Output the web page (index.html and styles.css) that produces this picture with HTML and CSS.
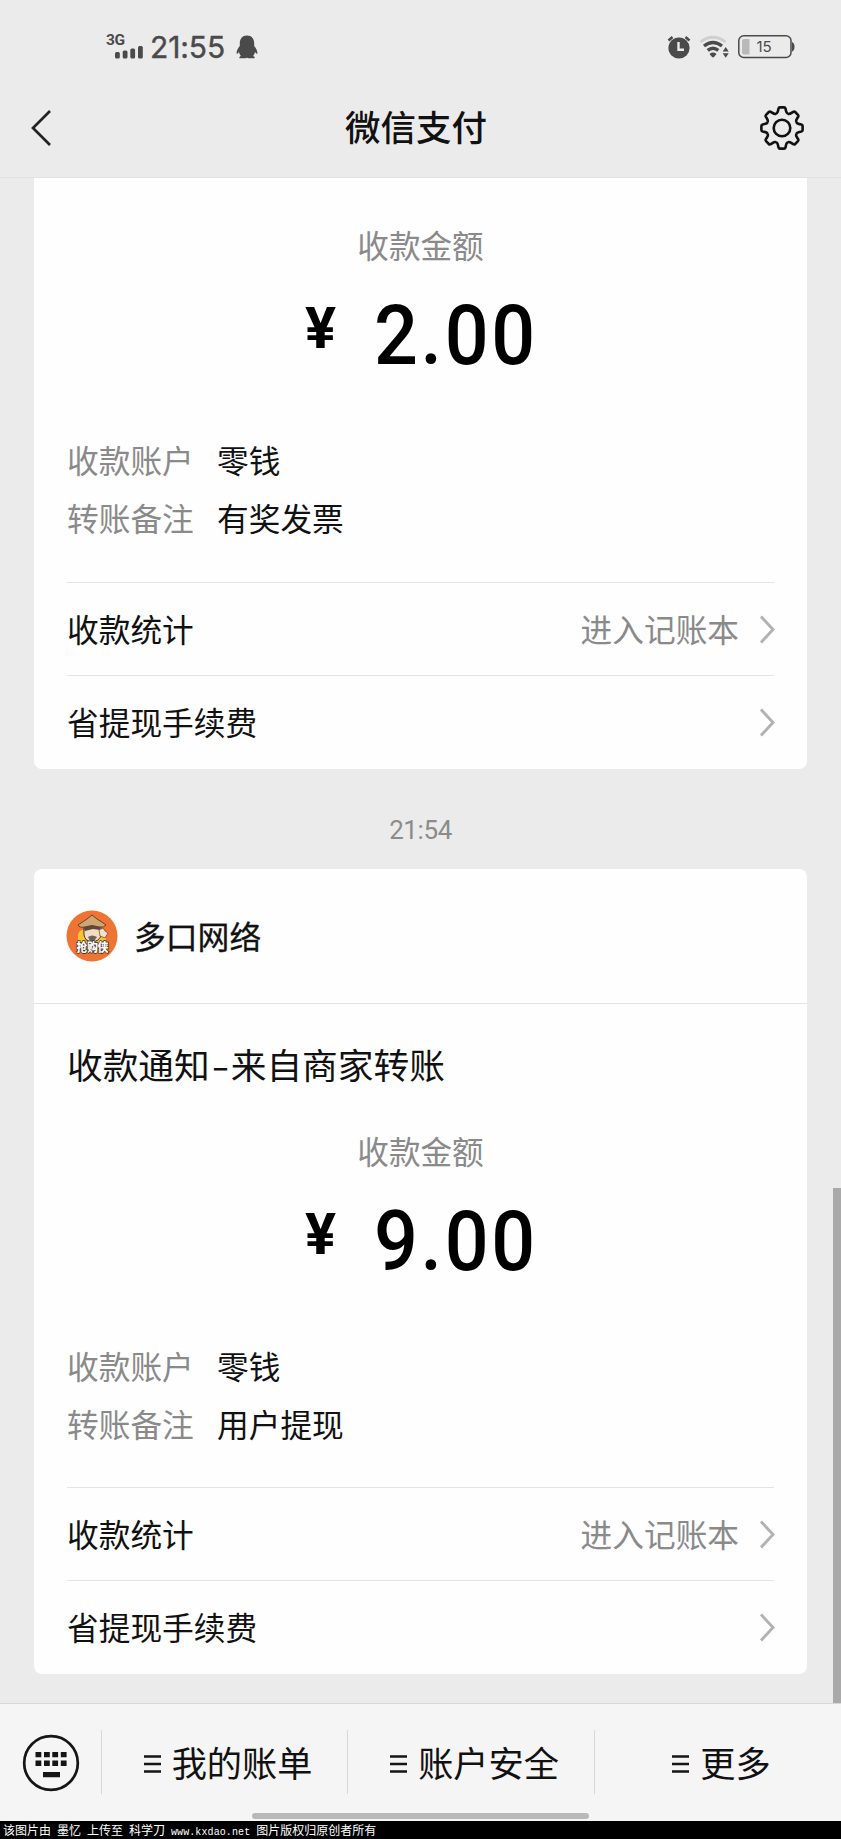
FILE: index.html
```html
<!DOCTYPE html>
<html lang="zh-CN">
<head>
<meta charset="utf-8">
<title>微信支付</title>
<link rel="stylesheet" href="styles.css">
</head>
<body>
<svg class="defs" width="0" height="0">
  <defs>
    <path id="tooth" d="M-5.9-14.2C-4.7-14.8-4.2-15.8-3.9-17.4L-3.5-19.4Q-3.2-20.6-2-20.6L2-20.6Q3.2-20.6 3.5-19.4L3.9-17.4C4.2-15.8 4.7-14.8 5.9-14.2"/>
    <path id="chevron" d="M2 1.5L14 14.5L2 27.5"/>
    <path id="lines" d="M0 1.5H17M0 9H17M0 16.5H17"/>
  </defs>
</svg>
<header class="header">
  <div class="status">
    <div class="status-left">
      <svg class="signal" width="40" height="30" viewBox="0 0 40 30">
        <text class="net" x="0" y="16.3" textLength="19">3G</text>
        <rect x="9" y="23" width="4.8" height="6.5" rx="1.5"/>
        <rect x="16.7" y="21.5" width="4.8" height="8" rx="1.5"/>
        <rect x="24.3" y="19.5" width="4.8" height="10" rx="1.5"/>
        <rect x="32" y="17" width="4.8" height="12.5" rx="1.5"/>
      </svg>
      <span class="clock">21:55</span>
      <svg class="penguin" width="22" height="24" viewBox="0 0 22 24">
        <path d="M11 .5C6.300 .5 3.800 4 3.800 8.500V11C2.500 12.500 .5 15.500 .6 18.200C.7 19.300 1.500 19 3 17C3.400 18.800 4 20 5 21C3.500 21.500 3.200 22.200 3.400 23.300H9.500L11 22.700L12.500 23.300H18.600C18.800 22.200 18.500 21.500 17 21C18 20 18.600 18.800 19 17C20.500 19 21.300 19.300 21.400 18.200C21.500 15.500 19.500 12.500 18.200 11V8.500C18.200 4 15.700 .5 11 .5Z"/>
      </svg>
    </div>
    <div class="status-right">
      <svg width="24" height="24" viewBox="0 0 24 24">
        <circle cx="12" cy="13" r="10.600"/>
        <path class="alarm-ear" d="M1.500 5.500L5.500 2M22.500 5.500L18.500 2"/>
        <path class="alarm-hand" d="M11.500 7V14.700H17"/>
      </svg>
      <svg class="wifi" width="30" height="24" viewBox="0 0 30 24">
        <path class="arc faint" d="M1.500 7Q14 -2.500 26.500 7"/>
        <path class="arc" d="M5 11Q14 4 23 11"/>
        <path class="arc" d="M8.700 15.400Q14 11 19.300 15.400"/>
        <path d="M10.500 19Q14 16.200 17.500 19L15 22Q14 22.800 13 22Z"/>
        <path d="M26.700 12L29.700 16.500H23.700ZM26.700 22.800L29.700 18.300H23.700Z"/>
      </svg>
      <svg class="battery" width="58" height="24" viewBox="0 0 58 24">
        <rect class="shell" x=".8" y=".8" width="52.200" height="21.700" rx="5"/>
        <path class="level" d="M6 4H11.500V19.500H6Q4 19.500 4 17.500V6Q4 4 6 4Z"/>
        <path d="M54 7Q56.500 8 56.500 11.700Q56.500 15.500 54 16.500Z"/>
        <text class="percent" x="18.500" y="17">15</text>
      </svg>
    </div>
  </div>
  <div class="navbar">
    <svg width="24" height="40" viewBox="0 0 24 40"><path class="back" d="M20 3L3 20L20 37"/></svg>
    <h1 class="title">微信支付</h1>
    <svg width="46" height="46" viewBox="-23 -23 46 46">
      <g class="gear">
        <use href="#tooth"/><use href="#tooth" transform="rotate(45)"/><use href="#tooth" transform="rotate(90)"/><use href="#tooth" transform="rotate(135)"/><use href="#tooth" transform="rotate(180)"/><use href="#tooth" transform="rotate(225)"/><use href="#tooth" transform="rotate(270)"/><use href="#tooth" transform="rotate(315)"/>
        <circle r="8.300"/>
      </g>
    </svg>
  </div>
</header>

<main class="chat">
  <section class="card card-first">
    <div class="summary">
      <div class="amount-label">收款金额</div>
      <div class="amount"><span class="yen">¥</span><span class="value">2.00</span></div>
      <dl class="details">
        <dt>收款账户</dt><dd>零钱</dd>
        <dt>转账备注</dt><dd>有奖发票</dd>
      </dl>
    </div>
    <div class="links">
      <div class="link"><span>收款统计</span><span class="hint">进入记账本</span><svg class="chev" width="16" height="29" viewBox="0 0 16 29"><use href="#chevron"/></svg></div>
      <div class="link"><span>省提现手续费</span><svg class="chev" width="16" height="29" viewBox="0 0 16 29"><use href="#chevron"/></svg></div>
    </div>
  </section>

  <time class="stamp">21:54</time>

  <section class="card">
    <div class="merchant">
      <svg class="avatar" width="52" height="52" viewBox="0 0 52 52">
        <circle cx="26" cy="26" r="25.500" fill="#ee7433"/>
        <path d="M12 33V25Q13 20 17 20L20 32ZM35 22Q41 25 40 33H31Z" fill="#f5c531"/>
        <path d="M18 16H35V26Q33 31 26 32Q19 31 18 25Z" fill="#f2dcc3" stroke="#4c382b" stroke-width="1"/>
        <path d="M17 17Q26 14 35 17L34 20L27 19L19 21Z" fill="#5a4a40"/>
        <path d="M22 27Q26 24 31 27L28 31H24Z" fill="#6c6059"/>
        <path d="M12 15Q18 11 21 9L26 5L31 9Q36 12 40 15Q38 18 33 17Q26 14 19 17Q13 18 12 15Z" fill="#cfa574" stroke="#6b4028" stroke-width="1"/>
        <path d="M33 20L37 18L39 21L42 23L39 28L34 26Z" fill="#f6dfc7" stroke="#6b4028" stroke-width=".7"/>
        <path d="M16 30Q26 34 36 30V36H16Z" fill="#e9c24a"/>
        <text class="avatar-name" x="10.500" y="41.500" textLength="32" lengthAdjust="spacingAndGlyphs">抢购侠</text>
      </svg>
      <span class="merchant-name">多口网络</span>
    </div>
    <div class="summary">
      <h2 class="notice">收款通知<span class="dash">-</span>来自商家转账</h2>
      <div class="amount-label">收款金额</div>
      <div class="amount"><span class="yen">¥</span><span class="value">9.00</span></div>
      <dl class="details">
        <dt>收款账户</dt><dd>零钱</dd>
        <dt>转账备注</dt><dd>用户提现</dd>
      </dl>
    </div>
    <div class="links">
      <div class="link"><span>收款统计</span><span class="hint">进入记账本</span><svg class="chev" width="16" height="29" viewBox="0 0 16 29"><use href="#chevron"/></svg></div>
      <div class="link"><span>省提现手续费</span><svg class="chev" width="16" height="29" viewBox="0 0 16 29"><use href="#chevron"/></svg></div>
    </div>
  </section>
  <div class="scrollbar"></div>
</main>

<footer class="footer">
  <nav class="menu">
    <div class="keyboard">
      <svg width="58" height="58" viewBox="0 0 58 58">
        <circle class="ring" cx="29" cy="29" r="26.800"/>
        <path d="M13.500 18h5.800v5.200h-5.800zM22 18h5.800v5.200h-5.800zM30.300 18h5.800v5.200h-5.800zM38.800 18h5.800v5.200h-5.800zM13.500 26.500h5.800v5.400h-5.800zM22 26.500h5.800v5.400h-5.800zM30.300 26.500h5.800v5.400h-5.800zM38.800 26.500h5.800v5.400h-5.800zM21 38h17v5.300h-17z"/>
      </svg>
    </div>
    <div class="item"><svg class="bars" width="17" height="18"><use href="#lines"/></svg><span>我的账单</span></div>
    <div class="item"><svg class="bars" width="17" height="18"><use href="#lines"/></svg><span>账户安全</span></div>
    <div class="item"><svg class="bars" width="17" height="18"><use href="#lines"/></svg><span>更多</span></div>
  </nav>
  <div class="home"></div>
</footer>
<div class="credit">该图片由 墨忆 上传至 科学刀 <span class="latin">www.kxdao.net</span> 图片版权归原创者所有</div>
</body>
</html>
```
FILE: styles.css
```css
* { box-sizing: border-box; }
body {
  margin: 0;
  width: 841px;
  height: 1839px;
  overflow: hidden;
  display: flex;
  flex-direction: column;
  background: #ebebeb;
  color: #111;
  font-family: "Noto Sans CJK SC", sans-serif;
}
svg { display: block; flex: none; overflow: visible; }
.defs { position: absolute; }
h1, h2, dl, dd { margin: 0; font-weight: 400; }

.header { height: 178px; flex: none; border-bottom: 1px solid #e2e2e2; }
.status {
  height: 80px;
  padding: 14px 46px 0 106px;
  display: flex;
  justify-content: space-between;
  align-items: center;
  fill: #4a4a4a;
}
.status-left, .status-right { display: flex; align-items: center; }
.net { font: 700 15.5px Roboto, sans-serif; }
.signal { margin-bottom: 6px; }
.clock {
  margin-left: 4px;
  width: 77px;
  font: 400 30px/30px Inter, sans-serif;
  letter-spacing: -0.1px;
  color: #4a4a4a;
  -webkit-text-stroke: .4px #4a4a4a;
  white-space: nowrap;
}
.penguin { margin-left: 9px; margin-top: -1px; }
.alarm-ear { stroke: #4a4a4a; stroke-width: 2.5; }
.alarm-hand { fill: none; stroke: #ebebeb; stroke-width: 2.4; }
.status-right { margin-top: -1px; }
.wifi { margin-left: 8px; }
.battery { margin-left: 9px; margin-right: -1px; }
.arc { fill: none; stroke: #4a4a4a; stroke-width: 3.4; }
.faint { stroke: #cfcfcf; stroke-width: 2.8; }
.shell { fill: none; stroke: #4a4a4a; stroke-width: 1.5; }
.level { fill: #b9b9b9; }
.percent { font: 400 15px Inter, sans-serif; }

.navbar {
  height: 96px;
  padding: 0 36px 0 30px;
  display: flex;
  align-items: center;
  justify-content: space-between;
}
.back { fill: none; stroke: #222; stroke-width: 2.7; }
.title { font-size: 35.5px; line-height: 50px; font-weight: 500; margin: -4px 0 0 19px; }
.gear { fill: none; stroke: #111; stroke-width: 2.6; stroke-linejoin: round; }

.chat { position: relative; height: 1525px; flex: none; padding: 0 34px; }
.card { background: #fefefe; border-radius: 8px; overflow: hidden; }
.card-first { border-radius: 0 0 8px 8px; }
.card-first .summary { height: 404px; padding-top: 43px; }
.summary { height: 483px; padding: 34px 33px 0; }
.amount-label { text-align: center; font-size: 31.6px; line-height: 46px; color: #8a8a8a; }
.amount {
  display: flex;
  justify-content: center;
  height: 96px;
  padding-left: 9px;
  color: #000;
  font-family: Roboto, sans-serif;
}
.yen { font-size: 58px; font-weight: 700; line-height: 70px; padding-top: 26px; margin-right: 31px; transform: scaleX(1); }
.value { font-size: 84px; font-weight: 500; line-height: 96px; padding-top: 21px; letter-spacing: 2.8px; transform: scaleX(.92); }
.details {
  margin-top: 67px;
  display: grid;
  grid-template-columns: 150px 1fr;
  grid-auto-rows: 58px;
  font-size: 31.7px;
  line-height: 58px;
}
.details dt { color: #8a8a8a; }
.links { padding: 0 33px; }
.link {
  height: 93px;
  border-top: 1px solid #e3e3e3;
  display: flex;
  align-items: center;
  font-size: 31.7px;
  line-height: 46px;
}
.link span { margin-bottom: 3px; }
.link:last-child { height: 94px; }
.hint { margin-left: auto; color: #8a8a8a; }
.chev { margin-left: 20px; margin-right: -1px; fill: none; stroke: #b2b2b2; stroke-width: 2.9; }
.link span:first-child + .chev { margin-left: auto; }
.stamp {
  display: block;
  height: 100px;
  padding-top: 11px;
  text-align: center;
  color: #8b8b8b;
  font: 400 26px/100px Roboto, sans-serif;
  letter-spacing: -.4px;
}
.merchant {
  height: 135px;
  padding-left: 32px;
  display: flex;
  align-items: center;
  border-bottom: 1px solid #e3e3e3;
}
.avatar-name { font: 900 12px "Noto Sans CJK SC", sans-serif; fill: #fff; stroke: #3e2b20; stroke-width: 1.5px; paint-order: stroke; }
.merchant-name { margin: -3px 0 0 16px; font-size: 31.8px; line-height: 46px; -webkit-text-stroke: .3px #111; }
.notice { font-size: 35.7px; line-height: 52px; margin-bottom: 37px; }
.dash { display: inline-block; width: 21px; text-align: center; transform: scaleX(1.45); }
.scrollbar { position: absolute; right: 0; top: 1010px; width: 8px; height: 515px; background: #a9a9a9; }

.footer { height: 118px; flex: none; background: #f5f5f5; border-top: 1px solid #d8d8d8; }
.menu { display: grid; grid-template-columns: 101px 246px 247px 247px; height: 109px; padding: 26px 0 19px; }
.keyboard { display: flex; align-items: center; padding: 1px 0 0 22px; fill: #151515; }
.ring { fill: none; stroke: #151515; stroke-width: 2.7; }
.item {
  display: flex;
  align-items: center;
  justify-content: center;
  gap: 11px;
  padding-left: 7px;
  border-left: 1px solid #d8d8d8;
  font-size: 35.2px;
  line-height: 50px;
}
.bars { stroke: #151515; stroke-width: 2.6; margin-top: 3px; }
.home { width: 337px; height: 6px; margin: 0 auto; border-radius: 3px; background: #b9b9b9; }
.credit {
  height: 18px;
  flex: none;
  padding-left: 3px;
  background: #000;
  color: #fff;
  white-space: pre;
  font: 12px/17px "Noto Sans CJK SC", sans-serif;
  word-spacing: 3.3px;
}
.latin { font: 10px/17px "Liberation Mono", monospace; letter-spacing: .1px; }
```
